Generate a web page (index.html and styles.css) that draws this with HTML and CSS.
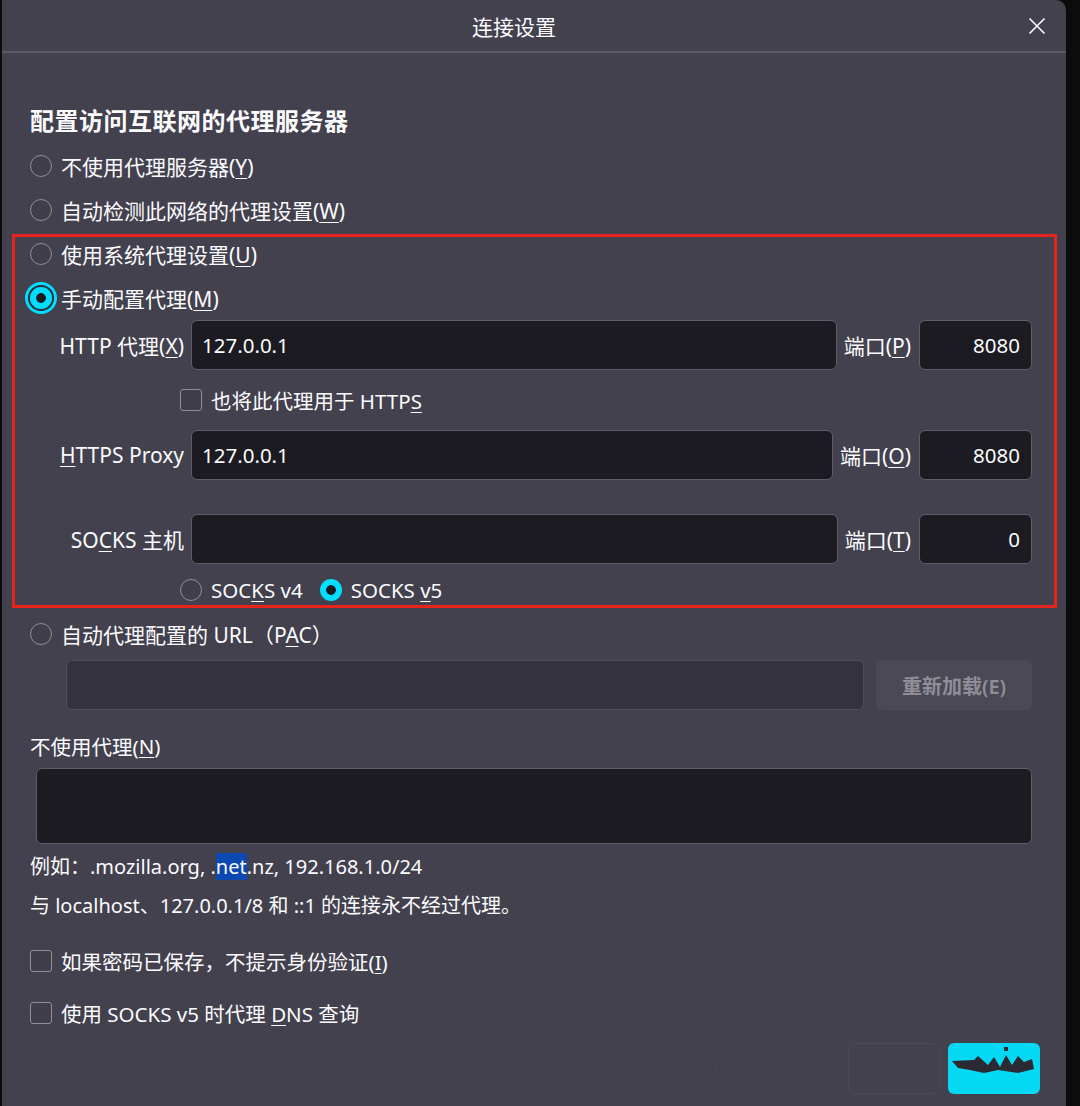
FILE: index.html
```html
<!DOCTYPE html>
<html lang="zh-CN">
<head>
<meta charset="utf-8">
<title>连接设置</title>
<link rel="stylesheet" href="styles.css">
</head>
<body>
<div class="dialog">
  <header class="header">
    <div class="title">连接设置</div>
    <div class="close">
      <svg width="18" height="18" viewBox="0 0 18 18"><path d="M1.5 1.5 L16.5 16.5 M16.5 1.5 L1.5 16.5" stroke="#fbfbfe" stroke-width="1.6" fill="none"/></svg>
    </div>
  </header>
  <main class="content">
    <h2 class="heading">配置访问互联网的代理服务器</h2>
    <div class="opt"><span class="radio"></span><span>不使用代理服务器(<u>Y</u>)</span></div>
    <div class="opt"><span class="radio"></span><span>自动检测此网络的代理设置(<u>W</u>)</span></div>
    <div class="highlight">
      <div class="opt"><span class="radio"></span><span>使用系统代理设置(<u>U</u>)</span></div>
      <div class="opt"><span class="radio checked focused"></span><span>手动配置代理(<u>M</u>)</span></div>
      <div class="field-row">
        <span class="flabel">HTTP 代理(<u>X</u>)</span>
        <div class="input grow">127.0.0.1</div>
        <span class="plabel">端口(<u>P</u>)</span>
        <div class="input port">8080</div>
      </div>
      <div class="sub-row"><span class="check"></span><span>也将此代理用于 HTTP<u>S</u></span></div>
      <div class="field-row">
        <span class="flabel"><u>H</u>TTPS Proxy</span>
        <div class="input grow">127.0.0.1</div>
        <span class="plabel">端口(<u>O</u>)</span>
        <div class="input port">8080</div>
      </div>
      <div class="field-row socks">
        <span class="flabel">SO<u>C</u>KS 主机</span>
        <div class="input grow"></div>
        <span class="plabel">端口(<u>T</u>)</span>
        <div class="input port">0</div>
      </div>
      <div class="sub-row versions">
        <span class="ver"><span class="radio"></span><span>SOC<u>K</u>S v4</span></span>
        <span class="ver"><span class="radio checked"></span><span>SOCKS <u>v</u>5</span></span>
      </div>
    </div>
    <div class="opt"><span class="radio"></span><span>自动代理配置的 URL（P<u>A</u>C）</span></div>
    <div class="pac-row">
      <div class="input disabled grow"></div>
      <div class="btn-disabled">重新加载(E)</div>
    </div>
    <div class="label-line">不使用代理(<u>N</u>)</div>
    <div class="textarea"></div>
    <p class="hint first">例如：.mozilla.org, .<span class="sel">net</span>.nz, 192.168.1.0/24</p>
    <p class="hint">与 localhost、127.0.0.1/8 和 ::1 的连接永不经过代理。</p>
    <div class="opt chk first-chk"><span class="check"></span><span>如果密码已保存，不提示身份验证(<u>I</u>)</span></div>
    <div class="opt chk"><span class="check"></span><span>使用 SOCKS v5 时代理 <u>D</u>NS 查询</span></div>
    <div class="footer">
      <div class="ghost-scribble"></div>
      <div class="ghost-btn"></div>
      <div class="ok-btn">
        <svg width="92" height="50" viewBox="0 0 92 50"><path d="M4 18 L26 17 L30 13 L40 22 L46 14 L52 24 L58 12 L64 22 L70 13 L76 19 L84 16 L86 26 L70 30 L50 27 L36 30 L22 27 L10 25 Z" fill="#2b2a33"/><rect x="56" y="4" width="4" height="4" fill="#2b2a33"/></svg>
      </div>
    </div>
  </main>
</div>
</body>
</html>
```

FILE: styles.css
```css
* { box-sizing: border-box; }
html, body {
  margin: 0;
  padding: 0;
  background: #0c0c0d;
}
body {
  font-family: "Noto Sans", "Noto Sans CJK SC", sans-serif;
  color: #fbfbfe;
  font-size: 20px;
}
u {
  text-decoration: underline;
  text-decoration-thickness: 1px;
  text-underline-offset: 3px;
}
.dialog {
  margin-left: 2px;
  width: 1064px;
  height: 1106px;
  background: #42414d;
  border-top-right-radius: 10px;
  overflow: hidden;
}
.header {
  height: 53px;
  border-bottom: 2px solid #5a5964;
  display: flex;
  align-items: center;
}
.title {
  flex: 1;
  text-align: center;
  padding-left: 9px;
  font-size: 21px;
}
.close {
  width: 40px;
  margin-right: 9px;
  display: flex;
  justify-content: center;
  align-items: center;
}
.content {
  padding: 0 34px 0 28px;
}
.heading {
  margin: 53px 0 8px;
  font-size: 24px;
  line-height: 30px;
  font-weight: 600;
  letter-spacing: 0.5px;
}
.opt {
  height: 44px;
  display: flex;
  align-items: center;
  gap: 9px;
  font-size: 21px;
}
.radio {
  width: 22px;
  height: 22px;
  border-radius: 50%;
  border: 1.5px solid #8f8f9d;
  background: #3f3e49;
  flex: none;
}
.radio.checked {
  border: none;
  background: radial-gradient(circle, #1c1b22 0 4.5px, #00ddff 5.2px);
}
.radio.focused {
  box-shadow: 0 0 0 2px #2b2a33, 0 0 0 5px #00ddff;
}
.check {
  width: 22px;
  height: 22px;
  border-radius: 3px;
  border: 1.5px solid #8f8f9d;
  background: #3f3e49;
  flex: none;
}
.highlight {
  position: relative;
}
.highlight::after {
  content: "";
  position: absolute;
  top: 2px;
  bottom: 4px;
  left: -18px;
  right: -25px;
  border: 3px solid #e8231b;
  pointer-events: none;
}
.field-row {
  height: 50px;
  display: flex;
  align-items: center;
  gap: 7px;
}
.field-row.socks {
  margin-top: 34px;
}
.flabel {
  width: 154px;
  text-align: right;
  font-size: 21px;
  flex: none;
  white-space: nowrap;
}
.plabel {
  font-size: 21px;
  margin-right: 1px;
  white-space: nowrap;
}
.input {
  height: 50px;
  background: #1c1b22;
  border: 1px solid #5f5e68;
  border-radius: 6px;
  padding: 0 10px;
  display: flex;
  align-items: center;
  font-size: 20.5px;
}
.input.grow { flex: 1; }
.input.port {
  width: 113px;
  flex: none;
  justify-content: flex-end;
  padding-right: 11px;
}
.input.disabled {
  background: #34333d;
  border-color: #4f4e58;
}
.sub-row {
  height: 60px;
  display: flex;
  align-items: center;
  gap: 9px;
  padding-left: 150px;
  font-size: 20.5px;
}
.sub-row.versions {
  height: 44px;
  margin-top: 4px;
  gap: 17px;
}
.ver {
  display: flex;
  align-items: center;
  gap: 9px;
}
.pac-row {
  margin: 4px 0 0 36px;
  display: flex;
  gap: 12px;
  height: 50px;
}
.btn-disabled {
  width: 156px;
  border-radius: 6px;
  background: #4a4954;
  color: #8f8e98;
  display: flex;
  align-items: center;
  justify-content: center;
  font-size: 20px;
  font-weight: 600;
}
.label-line {
  margin-top: 16px;
  height: 40px;
  display: flex;
  align-items: center;
  font-size: 20.5px;
}
.textarea {
  margin: 2px 0 0 6px;
  height: 76px;
  background: #1c1b22;
  border: 1px solid #5f5e68;
  border-radius: 6px;
}
.hint {
  margin: 0;
  height: 39px;
  line-height: 39px;
  font-size: 20px;
}
.hint.first { margin-top: 3px; }
.sel {
  background: #0b48b0;
}
.chk { font-size: 20.5px; }
.chk.first-chk { margin-top: 14px; }
.chk + .chk { margin-top: 8px; }
.footer {
  margin-top: 8px;
  height: 51px;
  display: flex;
  justify-content: flex-end;
  gap: 8px;
  margin-right: -8px;
}
.ghost-scribble {
  width: 130px;
  border-radius: 20px;
  border: 1px solid #4a4955;
  opacity: 0.6;
  margin-right: -6px;
}
.ghost-btn {
  width: 92px;
  border: 1px solid #4a4955;
  border-radius: 6px;
}
.ok-btn {
  width: 92px;
  border-radius: 6px;
  background: #05d8f2;
  overflow: hidden;
}
.ok-btn svg { display: block; }
```
